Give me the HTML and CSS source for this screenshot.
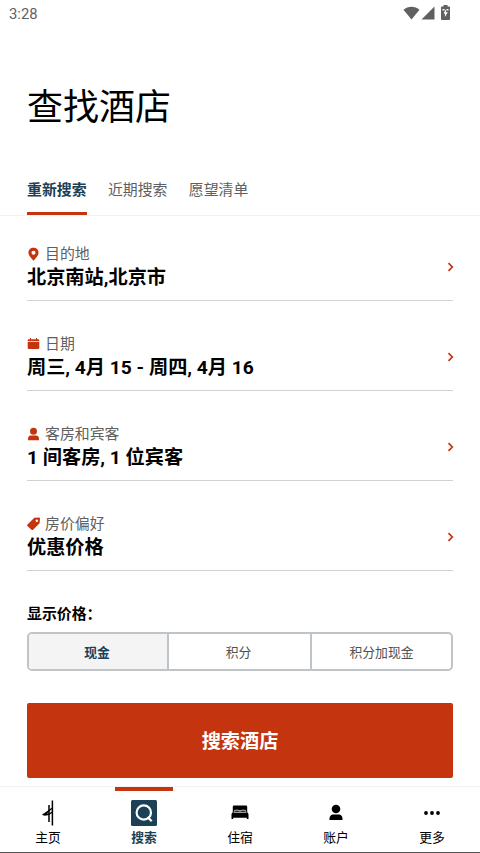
FILE: index.html
```html
<!DOCTYPE html>
<html lang="zh-CN">
<head>
<meta charset="utf-8">
<title>查找酒店</title>
<link rel="stylesheet" href="styles.css">
</head>
<body>
<div class="app">
  <header class="status">
    <span>3:28</span>
    <div class="status-icons">
      <svg width="17" height="14" viewBox="0 0 17 14"><path d="M.5 3.700C5-.3 12-.3 16.500 3.700L8.500 13.500Z"/></svg>
      <svg width="14" height="14" viewBox="0 0 14 14"><path d="M13.500.5V13.500H.5Z"/></svg>
      <svg class="battery" width="9" height="15" viewBox="0 0 9 15"><path d="M2.500 0h4v1.500H8q1 0 1 1V14q0 1-1 1H1q-1 0-1-1V2.500q0-1 1-1h1.500Z"/><path fill="#fff" d="M1.500 4h2v1.500h-2ZM5.500 4h2v1.500h-2ZM4.800 4.500 2.500 8.500h1.400V12L6.800 7.300H5V4.500Z"/></svg>
    </div>
  </header>
  <h1>查找酒店</h1>
  <nav class="tabs">
    <a class="tab tab-active">重新搜索</a>
    <a class="tab">近期搜索</a>
    <a class="tab">愿望清单</a>
  </nav>
  <main>
    <section class="field">
      <div class="info">
        <div class="label"><svg width="13" height="14" viewBox="0 0 13 14"><path fill-rule="evenodd" d="M6.500.7C3.500.7 1.400 2.800 1.400 5.600c0 2.500 2.500 5.500 5.100 8.100 2.600-2.600 5.100-5.600 5.100-8.100C11.600 2.800 9.500.7 6.500.7Zm0 3a2 2 0 1 1 0 4 2 2 0 0 1 0-4Z"/></svg>目的地</div>
        <div class="value">北京南站,北京市</div>
      </div>
      <svg class="chevron" width="7" height="10" viewBox="0 0 7 10"><path d="M1.500 1.200 5.300 5 1.500 8.800"/></svg>
    </section>
    <section class="field">
      <div class="info">
        <div class="label"><svg width="13" height="14" viewBox="0 0 13 14"><path d="M2 2.200h1V1h1v1.200h5V1h1v1.200h1q1.300 0 1.300 1.300v.8H.7v-.8Q.7 2.200 2 2.200ZM.7 5h11.600v5.800q0 1.200-1.200 1.200H1.900Q.7 12 .7 10.800Z"/></svg>日期</div>
        <div class="value">周三, 4月 15 - 周四, 4月 16</div>
      </div>
      <svg class="chevron" width="7" height="10" viewBox="0 0 7 10"><path d="M1.500 1.200 5.300 5 1.500 8.800"/></svg>
    </section>
    <section class="field">
      <div class="info">
        <div class="label"><svg width="13" height="14" viewBox="0 0 13 14"><circle cx="6.500" cy="4.200" r="3.500"/><path d="M1 13.200v-1.700Q1.200 8.700 4 8.500h5q2.800.2 3 3v1.700Z"/></svg>客房和宾客</div>
        <div class="value">1 间客房, 1 位宾客</div>
      </div>
      <svg class="chevron" width="7" height="10" viewBox="0 0 7 10"><path d="M1.500 1.200 5.300 5 1.500 8.800"/></svg>
    </section>
    <section class="field">
      <div class="info">
        <div class="label"><svg width="13" height="14" viewBox="0 0 13 14"><path fill-rule="evenodd" d="M7.300.8 12 .5q1 0 1 1l-.4 4.700L6.100 12.700q-.8.800-1.600 0L.6 9.200q-.9-.8-.1-1.600ZM9.800 2.500a1.200 1.200 0 1 0 0 2.400 1.200 1.200 0 0 0 0-2.400Z"/></svg>房价偏好</div>
        <div class="value">优惠价格</div>
      </div>
      <svg class="chevron" width="7" height="10" viewBox="0 0 7 10"><path d="M1.500 1.200 5.300 5 1.500 8.800"/></svg>
    </section>
    <div class="price-title">显示价格：</div>
    <div class="segments">
      <div class="segment segment-active">现金</div>
      <div class="segment">积分</div>
      <div class="segment">积分加现金</div>
    </div>
    <button class="submit">搜索酒店</button>
  </main>
  <nav class="bottom">
    <a class="item"><svg width="26" height="26" viewBox="0 0 26 26"><path fill="none" stroke="#000" stroke-width="1.500" d="M17.400.5V25.500M14 5V22"/><path d="M17.200 7.500C14 9 12 12 7 14.600q.5.900 3 1.100 4 0 7.500-3l-.6-1.100q-2 2-5 2.400 2.500-3.200 5.300-5Z"/></svg>主页</a>
    <a class="item item-active"><svg width="26" height="26" viewBox="0 0 26 26"><rect width="26" height="26" rx="1.500" fill="#1c4055"/><g fill="none" stroke="#fff" stroke-width="2.200"><circle cx="12.800" cy="12.500" r="7.200"/><path d="m16.500 17 4.200 4.200"/></g></svg>搜索</a>
    <a class="item"><svg width="26" height="26" viewBox="0 0 26 26"><path d="M7 5.500h12q1.200 0 1.200 1.200V12l1.300 2v5h-1.700v-1.200H6.200V19H4.500v-5l1.300-2V6.700Q5.800 5.500 7 5.500Z"/><path fill="none" stroke="#ddd" stroke-width=".9" d="M6.500 12.300h13M7.500 11.500v-1q2.500-.8 5 0v1M13.500 11.500v-1q2.500-.8 5 0v1"/></svg>住宿</a>
    <a class="item"><svg width="26" height="26" viewBox="0 0 26 26"><circle cx="13" cy="9" r="4.300"/><path d="M6.500 20v-1.500q.3-3.700 3.500-4h6q3.200.3 3.500 4V20Z"/></svg>账户</a>
    <a class="item"><svg width="26" height="26" viewBox="0 0 26 26"><circle cx="7" cy="13" r="1.900"/><circle cx="13" cy="13" r="1.900"/><circle cx="19" cy="13" r="1.900"/></svg>更多</a>
  </nav>
</div>
</body>
</html>
```
FILE: styles.css
```css
* { box-sizing: border-box; }
body {
  margin: 0;
  background: #fff;
  color: #000;
  font-family: Roboto, "Noto Sans CJK SC", sans-serif;
}
svg { display: block; flex: none; }
.app {
  display: flex;
  flex-direction: column;
  width: 480px;
  height: 853px;
  overflow: hidden;
}
.status {
  display: flex;
  justify-content: space-between;
  align-items: center;
  height: 27px;
  padding: 0 30px 0 9px;
  font-size: 14.800px;
  color: #606060;
}
.status-icons { display: flex; align-items: center; gap: 1px; margin-top: -2px; fill: #606060; }
.battery { margin-left: 5px; }
h1 {
  margin: 54px 27px 0;
  font-size: 36px;
  line-height: 54px;
  font-weight: 400;
}
.tabs {
  display: flex;
  gap: 21.300px;
  height: 81px;
  padding: 0 27px;
  border-bottom: 1px solid #f1f1f1;
  font-size: 14.900px;
  line-height: 22px;
  color: #606060;
}
.tab { padding-top: 44px; }
.tab-active { color: #1c4055; font-weight: 700; border-bottom: 3px solid #c4350f; }
main { padding: 0 27px; }
.field {
  display: flex;
  justify-content: space-between;
  align-items: center;
  height: 90px;
  padding-top: 22px;
  border-bottom: 1px solid #d2d2d2;
}
.field:first-child { height: 85px; padding-top: 17px; }
.info { display: flex; flex-direction: column; }
.label {
  display: flex;
  align-items: center;
  gap: 5px;
  padding-top: 1px;
  font-size: 14.900px;
  line-height: 22px;
  color: #606060;
  fill: #c4350f;
}
.value { margin-top: -1px; font-size: 19.200px; line-height: 27px; font-weight: 700; white-space: pre; }
.chevron { margin-right: -1px; fill: none; stroke: #c4350f; stroke-width: 1.700; }
.price-title { margin-top: 32px; font-size: 14.900px; line-height: 22px; font-weight: 700; }
.segments {
  display: grid;
  grid-template-columns: 138px 143px 1fr;
  height: 39px;
  margin-top: 7px;
  border: 2px solid #bfc4c8;
  border-radius: 5px;
  overflow: hidden;
}
.segment {
  display: flex;
  align-items: center;
  justify-content: center;
  padding: 0 2px 1px 0;
  font-size: 12.800px;
  color: #505050;
}
.segment:last-child { padding-right: 0; }
.segment + .segment { border-left: 2px solid #bfc4c8; }
.segment-active { background: #f4f4f4; color: #1c4055; font-weight: 700; }
.submit {
  display: block;
  width: 100%;
  height: 75px;
  margin-top: 32px;
  padding: 0 0 2px;
  border: 0;
  border-radius: 2px;
  background: #c4350f;
  color: #fff;
  font: inherit;
  font-size: 19.200px;
  font-weight: 700;
}
.bottom {
  display: grid;
  grid-template-columns: repeat(5, 1fr);
  height: 67px;
  margin-top: auto;
  border-top: 1px solid #f2f2f2;
  border-bottom: 1px solid #555;
}
.item {
  display: flex;
  flex-direction: column;
  align-items: center;
  gap: 2px;
  padding-top: 13px;
  font-size: 12.800px;
  line-height: 19px;
}
.item-active { color: #1c4055; font-weight: 700; }
.item-active::before {
  content: "";
  width: 58px;
  height: 4px;
  margin: -13px 0 7px;
  background: #c4350f;
}
```
